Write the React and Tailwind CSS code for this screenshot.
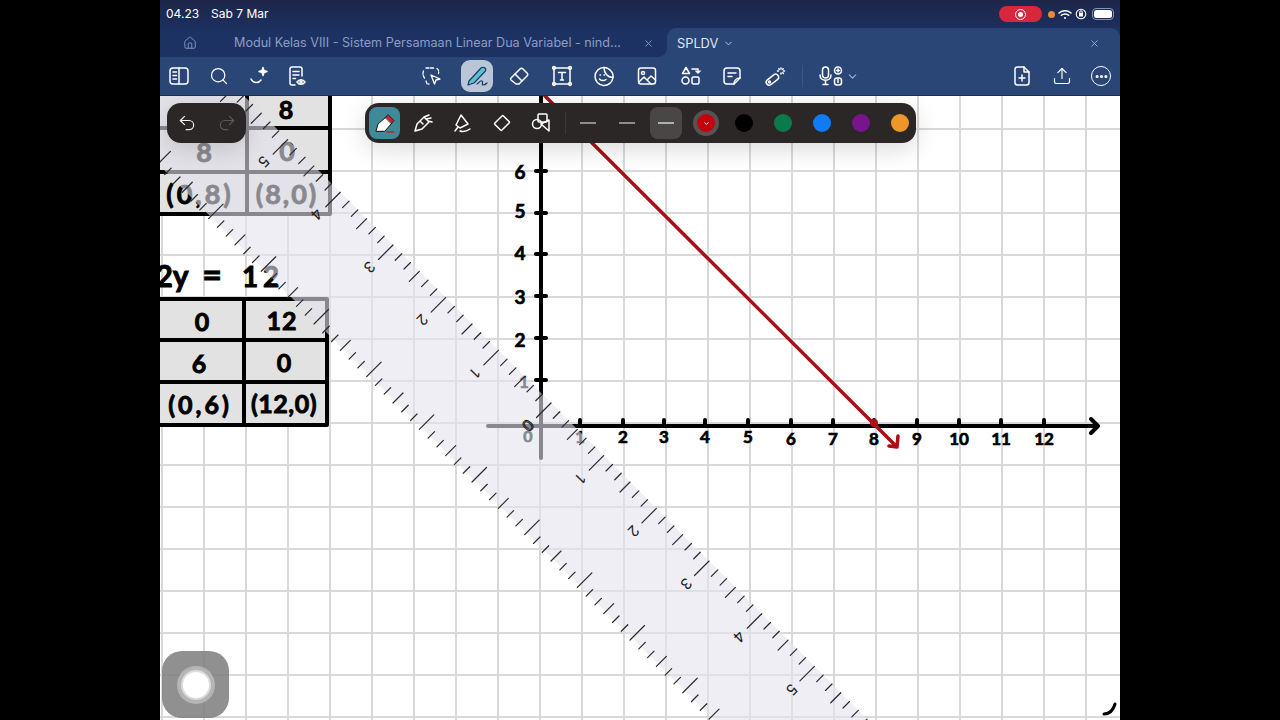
import React from "react";
import { Home, Search, X, ChevronDown, Undo2, Redo2, Upload, Ellipsis } from "lucide-react";

const sans = "font-['Inter','Liberation_Sans',sans-serif]";
const hand = "Lato, 'Open Sans', sans-serif";

function Ic({ children, w = 22, h = 22, vb = "0 0 22 22", sw = 1.5, color = "#fff" }) {
  return (
    <svg width={w} height={h} viewBox={vb} fill="none" stroke={color} strokeWidth={sw} strokeLinecap="round" strokeLinejoin="round">
      {children}
    </svg>
  );
}

const Sidebar = () => <Ic><rect x="2" y="3" width="18" height="16" rx="3" /><path d="M11 3v16M5 7h3.5M5 10.5h3.5M5 14h3.5" /></Ic>;
const Spark = () => <Ic><path d="M3 14c2 4 7 5 10 1" /><path d="M15 2.5l1 3 3 1-3 1-1 3-1-3-3-1 3-1z" fill="#fff" /></Ic>;
const DocEye = () => <Ic><path d="M9 20H6a2 2 0 0 1-2-2V4a2 2 0 0 1 2-2h8a2 2 0 0 1 2 2v7" /><path d="M7 6.5h6M7 10h6M7 13.5h2.5" /><path d="M11 17c2-3 6-3 8 0-2 3-6 3-8 0z" /><circle cx="15" cy="17" r="1" /></Ic>;
const Lasso = () => <Ic sw={1.3}><path d="M6 3h8M17 3.5c1.5 1 2 3 1.5 5M3.500 6c-1 2.500-.5 5 1 7M6 16c1 2 .5 3.500 3 3" strokeDasharray="3 1.5" /><path d="M11 10l9 4-4 1-1.500 4z" /></Ic>;
const PenIc = () => (
  <svg width="24" height="24" viewBox="0 0 24 24" fill="none" strokeLinecap="round" strokeLinejoin="round">
    <path d="M4 17L16 4c1-1 3-1 4 0s1 2.500 0 3.500L9 19l-6 2z" fill="#5cc0d0" stroke="#1c3a66" strokeWidth="1.2" />
    <path d="M12 20c2-1 3-4 5-3s-1 4 1 4 3-1 4-2" stroke="#1c3a66" strokeWidth="1.2" />
  </svg>
);
const Eraser = () => <Ic><path d="M3 13L12 4c1-1 2-1 3 0l4 4c1 1 1 2 0 3l-8 8H8l-5-4c-.5-.5-.5-1.500 0-2z" /><path d="M7 9l7 7" /></Ic>;
const TextBox = () => <Ic><rect x="3" y="3" width="16" height="16" /><circle cx="3" cy="3" r="1.400" /><circle cx="19" cy="3" r="1.400" /><circle cx="3" cy="19" r="1.400" /><circle cx="19" cy="19" r="1.400" /><path d="M7.500 7.500h7M11 7.500v7.500M9.500 15h3" /></Ic>;
const Sticker = () => <Ic><path d="M20 12.500A9 9 0 1 1 11 2.500c2 0 4 .8 5.500 2" /><path d="M11 2.500c0 5.500 3.500 10 9 10 .5-3-1-6-3.500-8" /><path d="M7 10h.5M11 10h.5M6.500 14c1.500 2 4.500 2 6.500.5" /></Ic>;
const Pict = () => <Ic><rect x="2.500" y="3" width="17" height="16" rx="2.500" /><circle cx="7" cy="8" r="1.500" /><path d="M3 17l5-5 7 7M12 14l3-3 4.500 4" /></Ic>;
const Shapes = () => <Ic><path d="M7 2.500l3.500 6h-7z" /><circle cx="6.500" cy="15.500" r="3.500" /><rect x="13" y="12" width="7" height="7" rx="1.500" /><path d="M13 4h6v4M17 6l2 2 2-2" /></Ic>;
const Note = () => <Ic><path d="M13 19H6a3 3 0 0 1-3-3V6a3 3 0 0 1 3-3h10a3 3 0 0 1 3 3v7z" /><path d="M7 8h8M7 11.500h4M13 19c0-3 2-6 6-6" /></Ic>;
const Laser = () => <Ic><rect x="1.500" y="12" width="14" height="6" rx="3" transform="rotate(-38 8 15)" /><circle cx="5.500" cy="17" r="1" /><path d="M17 3v1M17 8v1M13.500 6h1M19.500 6h1M14.800 3.800l.6.6M18.800 7.800l.6.6M19.200 3.800l-.6.6" /></Ic>;
const Mic = () => <Ic w={26} h={22} vb="0 0 26 22"><rect x="4.500" y="2" width="6" height="11" rx="3" /><path d="M2 10c0 7 11 7 11 0M7.500 16v3M5 19.500h5" /><circle cx="20" cy="5.500" r="3.500" /><path d="M18.500 5.500h3M20 4v3" /><rect x="16.500" y="13" width="7" height="7" rx="2.500" /><path d="M20 14.500v3" /></Ic>;
const NewDoc = () => <Ic><path d="M13 2H6.500A2.500 2.500 0 0 0 4 4.500v13A2.500 2.500 0 0 0 6.500 20h9a2.500 2.500 0 0 0 2.500-2.500V7z" /><path d="M13 2v5h5M11 10v6M8 13h6" /></Ic>;

const GRID = "bg-[linear-gradient(#d9d9d9_2px,transparent_2px),linear-gradient(90deg,#d9d9d9_2px,transparent_2px)] bg-[length:42px_42px] bg-[position:1px_32px]";

const T = ({ x, y, s = 22, w = 0.9, c = "#000", children, a = "middle", ls = 0 }) => (
  <text x={x} y={y} fontSize={s} textAnchor={a} fill={c} stroke={c} strokeWidth={w} letterSpacing={ls} fontFamily={hand} fontWeight="700">{children}</text>
);

function Drawing() {
  // svg coordinates are page coordinates; the canvas starts at (160,96)
  const xs = [[580, "1"], [623, "2"], [664, "3"], [705, "4"], [748, "5"], [791, "6"], [833, "7"], [874, "8"], [917, "9"], [959, "10"], [1001, "11"], [1044, "12"]];
  const ys = [[171, "6", 179], [213, "5", 218], [254, "4", 260], [296, "3", 304], [338, "2", 347], [380, "", 388]];
  const ticks = [];
  for (let k = -90; k <= 90; k++) {
    const len = k % 6 === 0 ? 14.5 : k % 3 === 0 ? 10 : 6.5;
    const d = k * 8.78;
    ticks.push(<line key={"u" + k} x1={551 + d} y1={403 + d} x2={551 + d - len} y2={403 + d + len} />);
    ticks.push(<line key={"l" + k} x1={472 + d} y1={482 + d} x2={472 + d + len} y2={482 + d - len} />);
  }
  const labels = [];
  for (let k = -5; k <= 5; k++) {
    const n = Math.abs(k);
    labels.push(
      <text key={k} x={528 + k * 52.8} y={425.500 + k * 52.8} fontSize="15" textAnchor="middle" dominantBaseline="central" fill={k === 0 ? "none" : "#222"} stroke={k === 0 ? "#222" : "none"} fontFamily="Inter, sans-serif"
        transform={`rotate(135 ${528 + k * 52.8} ${425.500 + k * 52.8})`}>{n}</text>
    );
  }
  return (
    <svg width="960" height="624" viewBox="160 96 960 624" className="absolute inset-0" fill="none" strokeLinecap="round">
      {/* table one */}
      <rect x="160" y="96" width="170" height="118" fill="#e2e2e2" />
      <g stroke="#000" strokeWidth="4">
        <path d="M247 96v118M330 96v118M160 128h170M160 172h170M160 214h170" />
      </g>
      <T x="286" y="119" s={25}>8</T>
      <T x="204" y="162" s={27}>8</T>
      <T x="287" y="161" s={27}>0</T>
      <T x="200" y="204" s={27} ls={3}>(0,8)</T>
      <T x="287" y="204" s={27} ls={2}>(8,0)</T>
      <T x="172" y="287" s={30}>2y</T>
      <T x="212" y="287" s={34}>=</T>
      <T x="250" y="287" s={28}>1</T>
      <T x="271" y="287" s={28}>2</T>
      {/* table two */}
      <rect x="160" y="299" width="167" height="126" fill="#e2e2e2" />
      <g stroke="#000" strokeWidth="4">
        <path d="M160 299h167M160 340h167M160 382h167M160 425h167M244 299v126M327 299v126" />
      </g>
      <T x="202" y="331" s={25}>0</T>
      <T x="282" y="330" s={25} ls={1}>12</T>
      <T x="199" y="373" s={25}>6</T>
      <T x="284" y="372" s={25}>0</T>
      <T x="200" y="414" s={25} ls={3}>(0,6)</T>
      <T x="284" y="413" s={25} ls={0.5}>(12,0)</T>
      {/* axes */}
      <path d="M541 96V458M488 426H1097M1091 419l7 7-7 7" stroke="#000" strokeWidth="4" strokeLinejoin="round" />
      {xs.map(([x, l]) => (
        <g key={x}>
          <line x1={x} y1="420" x2={x} y2="426" stroke="#000" strokeWidth="4" />
          <T x={x} y={x > 780 ? 445 : 443} s={17} w={0.7}>{l}</T>
        </g>
      ))}
      <T x="528" y="442" s={16} w={0.8}>0</T>
      {ys.map(([y, l, b]) => (
        <g key={y}>
          <line x1="536" y1={y} x2="546" y2={y} stroke="#000" strokeWidth="4" />
          {l && <T x="520" y={b} s={19} w={0.7}>{l}</T>}
        </g>
      ))}
      <T x="524" y="388" s={17} w={0.6}>1</T>
      {/* red line */}
      <path d="M545 96L897 447M898 436l-1 11-8-1" stroke="#a80f17" strokeWidth="3.500" strokeLinejoin="round" />
      <circle cx="874" cy="423" r="4" fill="#a80f17" />
      {/* small mark bottom right */}
      <path d="M1104 714c5 0 9-3 11-10" stroke="#000" strokeWidth="3" />
      {/* ruler */}
      <polygon points="244,96 868,720 714,720 160,166 160,96" fill="#e3e3ed" fillOpacity="0.6" />
      <g stroke="#2a2a2a" strokeWidth="1.200">{ticks}</g>
      {labels}
    </svg>
  );
}

const Swatch = ({ c }) => <span className={`w-[18px] h-[18px] rounded-full ${c}`} />;

export default function App() {
  return (
    <div className={`w-[1280px] h-[720px] bg-black flex justify-center overflow-hidden ${sans}`}>
      <div className="w-[960px] h-full flex flex-col bg-white">
        {/* status bar */}
        <div className="h-[28px] shrink-0 bg-[linear-gradient(#1d2648,#1c2f5f)] flex items-center justify-between pl-[6px] pr-[6px] text-white text-[12px]">
          <div className="flex gap-[12px]">
            <span>04.23</span>
            <span>Sab 7 Mar</span>
          </div>
          <div className="flex items-center">
            <div className="w-[43px] h-[16px] rounded-full bg-[#d8263c] flex items-center justify-center">
              <span className="w-[11px] h-[11px] rounded-full border border-white flex items-center justify-center">
                <span className="w-[5px] h-[5px] rounded-full bg-white" />
              </span>
            </div>
            <span className="w-[7px] h-[7px] rounded-full bg-[#e88a3c] ml-[6px]" />
            <svg className="ml-[3px]" width="14" height="11" viewBox="0 0 14 11" fill="none" stroke="#fff" strokeWidth="1.500" strokeLinecap="round"><path d="M1 4c3.500-3 8.500-3 12 0M3.300 6.300c2-1.800 5.400-1.800 7.400 0" /><circle cx="7" cy="9" r="1" fill="#fff" stroke="none" /></svg>
            <svg className="ml-[3px]" width="12" height="12" viewBox="0 0 12 12" fill="none" stroke="#fff" strokeWidth="1.100"><circle cx="6" cy="6" r="4.800" /><rect x="4" y="5" width="4" height="3.500" fill="#fff" stroke="none" /><path d="M4.800 5V4a1.200 1.200 0 0 1 2.400 0v1" /></svg>
            <div className="w-[22px] h-[12px] rounded-[4px] border border-[#8592b0] p-[1px] ml-[5px]">
              <div className="w-full h-full rounded-[2.500px] bg-white" />
            </div>
          </div>
        </div>
        {/* tabs */}
        <div className="h-[29px] shrink-0 bg-[linear-gradient(#1c3263_50%,#2a4676_50%)] flex items-stretch">
          <div className="w-[507px] shrink-0 bg-[#1c3263] rounded-br-[9px] flex items-stretch">
            <div className="w-[60px] flex items-center pl-[23px]">
              <Home size={14} color="#8d9cc4" strokeWidth={1.500} />
            </div>
            <div className="flex-1 flex items-center justify-between pl-[14px] pr-[13px] pt-[2px] text-[#8d9cc4] text-[12.600px]">
              <span className="whitespace-nowrap">Modul Kelas VIII - Sistem Persamaan Linear Dua Variabel - nind...</span>
              <X size={11} color="#8d9cc4" />
            </div>
          </div>
          <div className="flex-1 bg-[#2a4676] rounded-t-[9px] flex items-center justify-between pl-[10px] pr-[20px] pt-[2px] text-[#dfe6f5] text-[12.800px]">
            <div className="flex items-center gap-[5px]">
              <span>SPLDV</span>
              <ChevronDown size={11} color="#c5d0e8" />
            </div>
            <X size={11} color="#9aa9cb" />
          </div>
        </div>
        {/* toolbar */}
        <div className="h-[39px] shrink-0 bg-[#2a4676] border-b border-[#1b2f52] flex items-center px-[8px] text-white">
          <div className="flex items-center gap-[18px]">
            <Sidebar />
            <div className="w-[22px] flex justify-center"><Search size={20} strokeWidth={1.500} /></div>
            <Spark />
            <div className="-ml-[2px]"><DocEye /></div>
          </div>
          <div className="flex items-center ml-[112px]">
            <div className="w-[22px]"><Lasso /></div>
            <div className="w-[32px] h-[32px] rounded-[9px] bg-[#b9c6d8] flex items-center justify-center ml-[19px]"><PenIc /></div>
            <div className="flex items-center gap-[20.700px] ml-[15px]">
              <Eraser />
              <TextBox />
              <Sticker />
              <Pict />
              <Shapes />
              <Note />
              <Laser />
            </div>
            <div className="w-px h-[22px] bg-[#3b5788] ml-[16px] mr-[15px]" />
            <Mic />
            <ChevronDown size={13} color="#9fb0d0" className="ml-[2px]" />
          </div>
          <div className="flex items-center gap-[18px] ml-auto mr-[1px]">
            <NewDoc />
            <div className="w-[22px] flex justify-center"><Upload size={20} strokeWidth={1.400} /></div>
            <div className="w-[20px] h-[20px] rounded-full border-[1.500px] border-white flex items-center justify-center"><Ellipsis size={15} strokeWidth={3} /></div>
          </div>
        </div>
        {/* canvas */}
        <div className={`relative flex-1 overflow-hidden bg-white ${GRID}`}>
          <Drawing />
          {/* undo / redo */}
          <div className="absolute left-[7px] top-[7px] w-[79px] h-[40px] rounded-[14px] bg-[#2b2727] flex items-center justify-center gap-[20px] shadow-[0_6px_24px_rgba(0,0,0,0.15)]">
            <Undo2 size={20} color="#f2f2f2" strokeWidth={1.400} />
            <Redo2 size={20} color="#5c5a5a" strokeWidth={1.400} />
          </div>
          {/* pen tools */}
          <div className="absolute left-[205px] top-[7px] w-[551px] h-[40px] rounded-[14px] bg-[#2b2726] flex items-center pl-[4px] shadow-[0_6px_24px_rgba(0,0,0,0.15)]">
            <div className="w-[31px] h-[32px] rounded-[8px] bg-[#3f8a98] flex items-center justify-center">
              <svg width="24" height="24" viewBox="0 0 24 24" fill="none" strokeLinejoin="round" strokeLinecap="round"><path d="M3 20l2-7 8-7 6 6-7 8z" fill="#fff" stroke="#111" strokeWidth="1" /><path d="M12.500 6.500L15 3.500l6 6-2.500 3z" fill="#c8202c" stroke="#111" strokeWidth="0.800" /><path d="M14 21h7" stroke="#c8202c" strokeWidth="1.300" /></svg>
            </div>
            <div className="flex items-center gap-[17.400px] ml-[12px]">
              <Ic><path d="M3 19l2-7 7-7 5 5-7 7zM8 9l3 3M12 5l5-2M14 7l5-1M16 9l4 1" /></Ic>
              <Ic><path d="M10 3l7 9-8 4-4-3zM4 19l3-4M9 19c3 1 7 0 10-2" /></Ic>
              <Ic><rect x="5" y="6" width="12" height="10" rx="1" transform="rotate(-45 11 11)" /></Ic>
              <Ic><rect x="8" y="2" width="9" height="8" rx="1" /><circle cx="7" cy="12" r="4.500" /><path d="M11 12l8-4v11z" /></Ic>
            </div>
            <div className="w-px h-[22px] bg-[#3b3737] ml-[13px] mr-[14px]" />
            <div className="flex items-center">
              <span className="w-[16px] h-[2px] bg-[#8f8d8c]" />
              <span className="w-[16px] h-[2px] bg-[#8f8d8c] ml-[23px]" />
              <span className="w-[32px] h-[32px] rounded-[8px] bg-[#494646] flex items-center justify-center ml-[15px]"><span className="w-[16px] h-[2px] bg-[#b0aeae]" /></span>
            </div>
            <div className="flex items-center gap-[21px] ml-[11px]">
              <span className="w-[26px] h-[26px] -mr-[5px] rounded-full bg-[#c4000c] border-4 border-[#575353] flex items-center justify-center"><ChevronDown size={7} color="#fff" strokeWidth={3} /></span>
              <Swatch c="bg-black" />
              <Swatch c="bg-[#0b7a4b]" />
              <Swatch c="bg-[#0f7bf5]" />
              <Swatch c="bg-[#7a148c]" />
              <Swatch c="bg-[#ef962a]" />
            </div>
          </div>
          {/* assistive touch */}
          <div className="absolute left-[2px] top-[555px] w-[67px] h-[67px] rounded-[20px] bg-[#7d7d7d]/85 flex items-center justify-center">
            <div className="w-[38px] h-[38px] rounded-full bg-[#b5b5b5] flex items-center justify-center">
              <div className="w-[30px] h-[30px] rounded-full bg-[#dcdcdc] flex items-center justify-center">
                <div className="w-[26px] h-[26px] rounded-full bg-white" />
              </div>
            </div>
          </div>
        </div>
      </div>
    </div>
  );
}
